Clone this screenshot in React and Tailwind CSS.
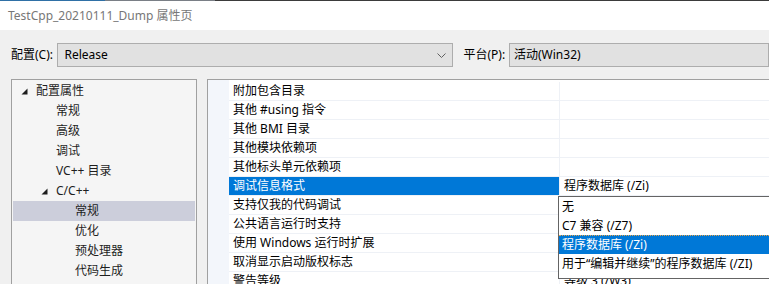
import React from 'react';

const font = { fontFamily: '"Noto Sans", "Noto Sans CJK SC", sans-serif' };

const tree = [
  { label: '配置属性', level: 0, open: true },
  { label: '常规', level: 1 },
  { label: '高级', level: 1 },
  { label: '调试', level: 1 },
  { label: 'VC++ 目录', level: 1 },
  { label: 'C/C++', level: 1, open: true },
  { label: '常规', level: 2, selected: true },
  { label: '优化', level: 2 },
  { label: '预处理器', level: 2 },
  { label: '代码生成', level: 2 },
];

const rows = [
  { name: '附加包含目录' },
  { name: '其他 #using 指令' },
  { name: '其他 BMI 目录' },
  { name: '其他模块依赖项' },
  { name: '其他标头单元依赖项' },
  { name: '调试信息格式', value: '程序数据库 (/Zi)', selected: true },
  { name: '支持仅我的代码调试' },
  { name: '公共语言运行时支持' },
  { name: '使用 Windows 运行时扩展' },
  { name: '取消显示启动版权标志' },
  { name: '警告等级', value: '等级 3 (/W3)' },
];

const options = ['无', 'C7 兼容 (/Z7)', '程序数据库 (/Zi)', '用于“编辑并继续”的程序数据库 (/ZI)'];

function Triangle() {
  return (
    <svg width="7" height="7" viewBox="0 0 7 7" className="shrink-0">
      <polygon points="6.5,0.5 6.5,6.5 0.5,6.5" fill="#1e1e1e" />
    </svg>
  );
}

export default function App() {
  return (
    <div className="w-[769px] h-[284px] overflow-hidden bg-[#f0f0f0] text-[12px] text-black flex flex-col" style={font}>
      <div className="h-px flex shrink-0">
        <div className="w-[105px] bg-[#2f70a6]" />
        <div className="w-[110px] bg-[#7a7f86]" />
        <div className="flex-1 bg-[#3b3b3b]" />
      </div>
      <div className="h-[29px] shrink-0 bg-white flex items-center pl-[8px] text-[#777777] leading-none">
        TestCpp_20210111_Dump 属性页
      </div>

      <div className="flex items-center mt-[13px] pl-[11px] h-[24px] shrink-0">
        <span className="w-[55px] leading-none">配置(C):</span>
        <div className="w-[396px] h-[24px] shrink-0 bg-[#e1e1e1] border border-[#adadad] flex items-center pl-[6px] pr-[6px]">
          <span className="flex-1 leading-none">Release</span>
          <svg width="9" height="5" viewBox="0 0 9 5">
            <polyline points="0.5,0.5 4.5,4.5 8.5,0.5" fill="none" stroke="#606060" strokeWidth="1" />
          </svg>
        </div>
        <span className="ml-[10px] w-[54px] leading-none">平台(P):</span>
        <div className="w-[260px] h-[24px] shrink-0 bg-[#e1e1e1] border border-[#adadad] flex items-center pl-[4px]">
          <span className="leading-none">活动(Win32)</span>
        </div>
      </div>

      <div className="flex mt-[12px] pl-[11px] gap-[10px] flex-1 min-h-0">
        <div className="w-[186px] shrink-0 bg-[#f5f5f5] border-t border-l border-r border-[#a0a0a0] pt-[1px] px-[1px]">
          {tree.map((t, i) => (
            <div
              key={i}
              className={`h-[20px] flex items-center leading-none text-[#1e1e1e] ${t.selected ? 'bg-[#cccedb]' : ''}`}
            >
              {t.level === 0 && (
                <>
                  <span className="ml-[8px]"><Triangle /></span>
                  <span className="ml-[8px]">{t.label}</span>
                </>
              )}
              {t.level === 1 && (t.open ? (
                <>
                  <span className="ml-[28px]"><Triangle /></span>
                  <span className="ml-[8px]">{t.label}</span>
                </>
              ) : (
                <span className="ml-[43px]">{t.label}</span>
              ))}
              {t.level === 2 && <span className="ml-[62px]">{t.label}</span>}
            </div>
          ))}
        </div>

        <div className="relative flex-1 min-w-0 border-t border-l border-[#a0a0a0] bg-white flex">
          <div className="w-[21px] shrink-0 bg-[#f3f6fb]" />
          <div className="w-[600px] shrink-0 pt-[2px]">
            {rows.map((r, i) => (
              <div key={i} className="h-[19px] flex border-b border-[#eef1f6]">
                <div
                  className={`w-[330px] shrink-0 flex items-center pl-[4px] leading-none ${r.selected ? 'bg-[#0078d7] text-white' : ''}`}
                >
                  {r.name}
                </div>
                <div className="w-px bg-[#eef1f6]" />
                <div className="flex-1 flex items-center pl-[4px] leading-none">{r.value}</div>
              </div>
            ))}
          </div>

          <div className="absolute left-[350px] top-[116px] w-[230px] bg-white border border-[#646464] pb-[5px]">
            {options.map((o, i) => (
              <div
                key={i}
                className={`h-[19px] flex items-center pl-[3px] leading-none whitespace-nowrap ${
                  i === 2 ? 'bg-[#0078d7] text-white border-t border-dotted border-[#e8a54a]' : ''
                }`}
              >
                {o}
              </div>
            ))}
          </div>
        </div>
      </div>
    </div>
  );
}
